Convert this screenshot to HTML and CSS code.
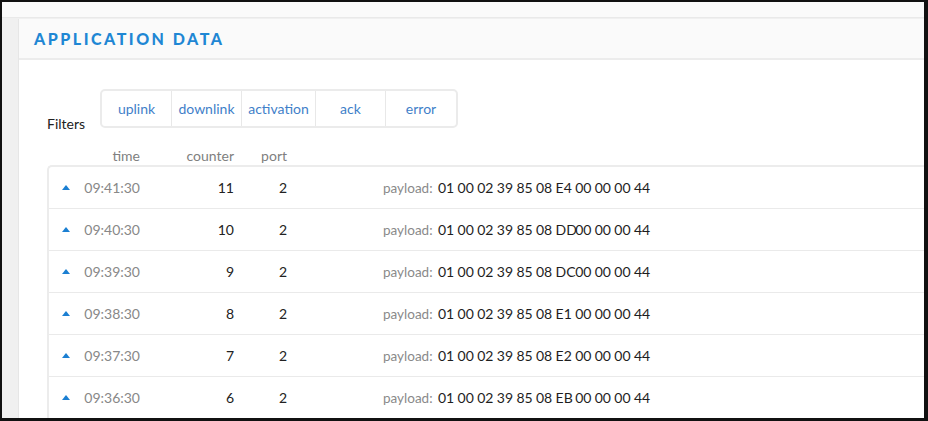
FILE: index.html
```html
<!DOCTYPE html>
<html>
<head>
<meta charset="utf-8">
<link rel="stylesheet" href="styles.css">
</head>
<body>
<div class="frame">
  <div class="topbar"></div>
  <div class="main">
    <div class="sidebar"></div>
    <div class="panel">
      <div class="panel-head"><h2 class="title">APPLICATION DATA</h2></div>
      <div class="panel-body">
        <div class="filters">
          <span class="filters-label">Filters</span>
          <div class="btn-group">
            <span class="btn">uplink</span>
            <span class="btn">downlink</span>
            <span class="btn">activation</span>
            <span class="btn">ack</span>
            <span class="btn">error</span>
          </div>
        </div>
        <div class="thead">
          <span class="c-time">time</span>
          <span class="c-counter">counter</span>
          <span class="c-port">port</span>
        </div>
        <div class="table">
          <div class="row"><span class="c-time"><i class="arrow"></i><span class="time">09:41:30</span></span><span class="c-counter">11</span><span class="c-port">2</span><span class="plabel">payload:</span><span class="payload"><b>01</b><b>00</b><b>02</b><b>39</b><b>85</b><b>08</b><b>E4</b><b>00</b><b>00</b><b>00</b><b>44</b></span></div>
          <div class="row"><span class="c-time"><i class="arrow"></i><span class="time">09:40:30</span></span><span class="c-counter">10</span><span class="c-port">2</span><span class="plabel">payload:</span><span class="payload"><b>01</b><b>00</b><b>02</b><b>39</b><b>85</b><b>08</b><b>DD</b><b>00</b><b>00</b><b>00</b><b>44</b></span></div>
          <div class="row"><span class="c-time"><i class="arrow"></i><span class="time">09:39:30</span></span><span class="c-counter">9</span><span class="c-port">2</span><span class="plabel">payload:</span><span class="payload"><b>01</b><b>00</b><b>02</b><b>39</b><b>85</b><b>08</b><b>DC</b><b>00</b><b>00</b><b>00</b><b>44</b></span></div>
          <div class="row"><span class="c-time"><i class="arrow"></i><span class="time">09:38:30</span></span><span class="c-counter">8</span><span class="c-port">2</span><span class="plabel">payload:</span><span class="payload"><b>01</b><b>00</b><b>02</b><b>39</b><b>85</b><b>08</b><b>E1</b><b>00</b><b>00</b><b>00</b><b>44</b></span></div>
          <div class="row"><span class="c-time"><i class="arrow"></i><span class="time">09:37:30</span></span><span class="c-counter">7</span><span class="c-port">2</span><span class="plabel">payload:</span><span class="payload"><b>01</b><b>00</b><b>02</b><b>39</b><b>85</b><b>08</b><b>E2</b><b>00</b><b>00</b><b>00</b><b>44</b></span></div>
          <div class="row"><span class="c-time"><i class="arrow"></i><span class="time">09:36:30</span></span><span class="c-counter">6</span><span class="c-port">2</span><span class="plabel">payload:</span><span class="payload"><b>01</b><b>00</b><b>02</b><b>39</b><b>85</b><b>08</b><b>EB</b><b>00</b><b>00</b><b>00</b><b>44</b></span></div>
        </div>
      </div>
    </div>
  </div>
</div>
</body>
</html>
```

FILE: styles.css
```css
html, body {
  margin: 0;
  padding: 0;
  background: #111;
  overflow: hidden;
}
body {
  font-family: Lato, "Open Sans", sans-serif;
  width: 928px;
  height: 421px;
}
.frame {
  margin: 2px 4px 0 2px;
  height: 416px;
  background: #f0f0f0;
  overflow: hidden;
  display: flex;
  flex-direction: column;
}
.topbar {
  height: 15px;
  background: #fafafa;
  border-bottom: 1px solid #e9e9e9;
  flex: none;
}
.main {
  flex: 1;
  display: flex;
  margin-top: 1px;
}
.sidebar {
  width: 16px;
  flex: none;
  background: #f0f0f0;
  border-right: 1px solid #e6e6e6;
}
.panel {
  flex: 1;
  background: #fff;
  display: flex;
  flex-direction: column;
}
.panel-head {
  height: 39px;
  background: #fafafa;
  border-bottom: 2px solid #ececec;
  display: flex;
  align-items: center;
  padding-left: 15px;
}
.title {
  margin: 0;
  font-family: Lato, sans-serif;
  font-weight: 900;
  font-size: 16px;
  letter-spacing: 2.5px;
  color: #1f87d4;
}
.panel-body {
  padding: 29px 0 0 28px;
}
.filters {
  display: flex;
  align-items: flex-end;
}
.filters-label {
  width: 53px;
  font-size: 14px;
  color: #222;
  line-height: 14px;
  margin-bottom: -3px;
}
.btn-group {
  display: flex;
  border: 2px solid #ebebeb;
  border-radius: 5px;
  height: 35px;
}
.btn {
  display: flex;
  align-items: center;
  justify-content: center;
  font-size: 14px;
  color: #3f7fc9;
  border-left: 1px solid #e8e8e8;
}
.btn:first-child { border-left: none; width: 69px; }
.btn:nth-child(2) { width: 69px; }
.btn:nth-child(3) { width: 73px; }
.btn:nth-child(4) { width: 69px; }
.btn:nth-child(5) { width: 70px; }
.thead {
  display: flex;
  height: 20px;
  align-items: center;
  margin-top: 17px;
  font-size: 14px;
  color: #808080;
  padding-left: 2px;
}
.c-time {
  width: 91px;
  text-align: right;
  display: flex;
  align-items: center;
  justify-content: space-between;
}
.thead .c-time { justify-content: flex-end; }
.c-counter {
  width: 94px;
  text-align: right;
}
.c-port {
  width: 53px;
  text-align: right;
}
.table {
  border-top: 2px solid #ececec;
  border-left: 2px solid #ececec;
  border-top-left-radius: 5px;
}
.row {
  display: flex;
  align-items: center;
  height: 41px;
  border-bottom: 1px solid #eaeaea;
  font-size: 14px;
  color: #222;
}
.arrow {
  width: 0;
  height: 0;
  border-left: 4px solid transparent;
  border-right: 4px solid transparent;
  border-bottom: 5px solid #1b7fd2;
  margin-left: 13px;
}
.time {
  color: #888;
}
.plabel {
  margin-left: 96px;
  width: 55px;
  font-size: 13.5px;
  color: #8a8a8a;
}
.payload {
  display: flex;
}
.payload b {
  font-weight: normal;
  width: 19.6px;
  white-space: nowrap;
  color: #1e1e1e;
}
```
